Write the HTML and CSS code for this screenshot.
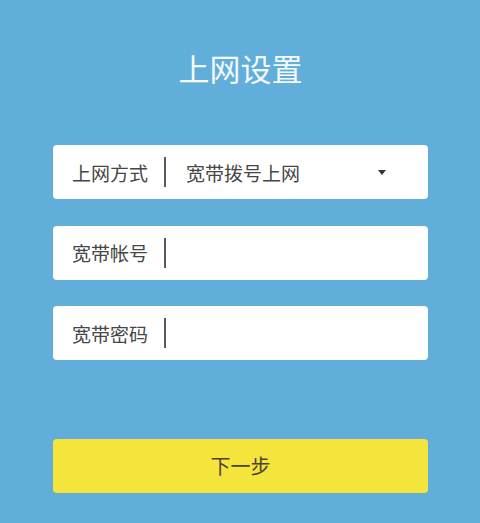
FILE: index.html
```html
<!DOCTYPE html>
<html lang="zh-CN">
<head>
    <meta charset="UTF-8">
    <meta name="viewport" content="width=device-width, initial-scale=1.0">
    <title>上网设置</title>
    <link rel="stylesheet" href="styles.css">
</head>
<body>
    <div class="page">
        <h1 class="title">上网设置</h1>

        <div class="form">
            <div class="row">
                <span class="label">上网方式</span>
                <span class="bar"></span>
                <span class="value">宽带拨号上网</span>
                <span class="arrow"></span>
            </div>
            <div class="row">
                <span class="label">宽带帐号</span>
                <span class="bar"></span>
                <input class="field" type="text">
            </div>
            <div class="row">
                <span class="label">宽带密码</span>
                <span class="bar"></span>
                <input class="field" type="password">
            </div>
        </div>

        <div class="next">下一步</div>
    </div>
</body>
</html>
```

FILE: styles.css
```css
/*初始化*/
html,body,h1{
    margin: 0;
    padding: 0;
}

body{
    background-color: #60aed9;
    font-family: "Noto Sans CJK SC", "Noto Sans", sans-serif;
}

/*整体容器*/
.page{
    height: 523px;
    padding: 48px 52px 0 53px;
    box-sizing: border-box;
    display: flex;
    flex-direction: column;
}

/*标题*/
.title{
    font-size: 31px;
    font-weight: normal;
    line-height: 40px;
    color: #f4f9fc;
    text-align: center;
}

/*表单行*/
.form{
    margin-top: 57px;
    display: flex;
    flex-direction: column;
    gap: 26.5px;
}

.row{
    height: 54px;
    background-color: #fff;
    border-radius: 4px;
    display: flex;
    align-items: center;
    padding-left: 19px;
    padding-right: 42px;
    color: #464646;
    font-size: 19px;
}

.label{
    width: 92px;
}

/*竖线*/
.bar{
    width: 2px;
    height: 30px;
    background-color: #5a5a5a;
}

.value{
    margin-left: 20px;
    flex: 1;
}

/*下拉三角*/
.arrow{
    width: 0;
    height: 0;
    border-left: 4px solid transparent;
    border-right: 4px solid transparent;
    border-top: 5px solid #333;
}

.field{
    flex: 1;
    border: none;
    outline: none;
    background: transparent;
    height: 40px;
    margin-left: 10px;
}

/*下一步按钮*/
.next{
    margin-top: 79px;
    height: 54px;
    background-color: #f5e43c;
    border-radius: 4px;
    color: #4a4530;
    font-size: 20px;
    line-height: 54px;
    text-align: center;
}
```
